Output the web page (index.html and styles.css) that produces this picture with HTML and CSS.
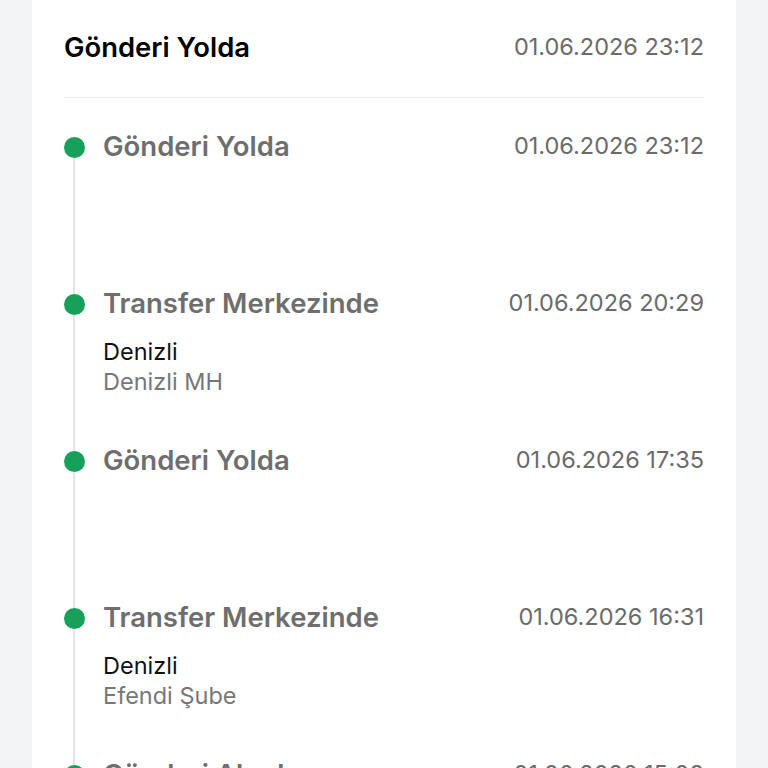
FILE: index.html
```html
<!DOCTYPE html>
<html lang="tr">
<head>
    <meta charset="UTF-8">
    <title>Gönderi Takibi</title>
    <link rel="stylesheet" href="styles.css">
</head>
<body>
<div class="card">
    <div class="card-head">
        <h2>Gönderi Yolda</h2>
        <span class="date">01.06.2026 23:12</span>
    </div>

    <!-- hareketler -->
    <div class="timeline">
        <div class="step">
            <div class="marker"><span class="dot"></span><span class="line"></span></div>
            <div class="body">
                <div class="row"><span class="title">Gönderi Yolda</span><span class="date">01.06.2026 23:12</span></div>
            </div>
        </div>
        <div class="step">
            <div class="marker"><span class="dot"></span><span class="line"></span></div>
            <div class="body">
                <div class="row"><span class="title">Transfer Merkezinde</span><span class="date">01.06.2026 20:29</span></div>
                <div class="city">Denizli</div>
                <div class="branch">Denizli MH</div>
            </div>
        </div>
        <div class="step">
            <div class="marker"><span class="dot"></span><span class="line"></span></div>
            <div class="body">
                <div class="row"><span class="title">Gönderi Yolda</span><span class="date">01.06.2026 17:35</span></div>
            </div>
        </div>
        <div class="step">
            <div class="marker"><span class="dot"></span><span class="line"></span></div>
            <div class="body">
                <div class="row"><span class="title">Transfer Merkezinde</span><span class="date">01.06.2026 16:31</span></div>
                <div class="city">Denizli</div>
                <div class="branch">Efendi Şube</div>
            </div>
        </div>
        <div class="step">
            <div class="marker"><span class="dot"></span><span class="line"></span></div>
            <div class="body">
                <div class="row"><span class="title">Gönderi Alındı</span><span class="date">01.06.2026 15:08</span></div>
                <div class="city">Denizli</div>
                <div class="branch">Efendi Şube</div>
            </div>
        </div>
    </div>
</div>
</body>
</html>
```

FILE: styles.css
```css
body { font-family: Inter, "Noto Sans", sans-serif; background: #f3f4f6; margin: 0; padding: 0 32px; overflow: hidden; }
.card { background: #fff; padding: 0 32px; min-height: 900px; }
.card-head { display: flex; justify-content: space-between; align-items: center; padding: 31px 0 34px; border-bottom: 1px solid #efefef; }
.card-head h2 { margin: 0; font-size: 27.4px; line-height: 32px; font-weight: 600; color: #000; }
.date { font-size: 23.5px; color: #6b6b6b; line-height: 32px; }
.timeline { padding-top: 32px; }
.step { display: flex; gap: 19px; min-height: 157px; }
.marker { width: 20px; display: flex; flex-direction: column; align-items: center; }
.dot { width: 21px; height: 21px; border-radius: 50%; background: #17a059; margin-top: 7px; flex: none; }
.line { flex: 1; width: 2px; background: #e4e4e4; margin-bottom: -7px; }
.body { flex: 1; }
.row { display: flex; justify-content: space-between; }
.title { font-size: 27.5px; line-height: 32px; font-weight: 600; color: #6e6e6e; }
.city { font-size: 23.5px; line-height: 30px; color: #111; margin-top: 18px; }
.branch { font-size: 23.5px; line-height: 30px; color: #777; }
```
